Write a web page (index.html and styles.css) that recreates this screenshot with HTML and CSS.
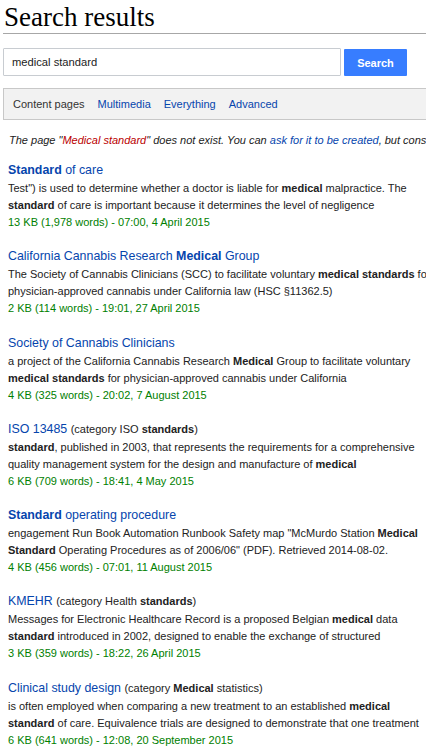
FILE: index.html
```html
<!DOCTYPE html>
<html>
<head>
<meta charset="utf-8">
<link rel="stylesheet" href="styles.css">
</head>
<body>
<div class="page">
  <h1 class="heading">Search results</h1>
  <form class="search-form">
    <input class="search-input" type="text" value="medical standard">
    <button class="search-button" type="button">Search</button>
  </form>
  <div class="tabs">
    <span class="tab tab-current">Content pages</span>
    <a class="tab">Multimedia</a>
    <a class="tab">Everything</a>
    <a class="tab">Advanced</a>
  </div>
  <p class="notice">The page "<a class="new">Medical standard</a>" does not exist. You can <a>ask for it to be created</a>, but consider checking the search results below to see whether the topic is already covered.</p>
  <ul class="results">
    <li class="result">
      <div class="result-title"><a><b>Standard</b> of care</a></div>
      <div class="snippet">Test") is used to determine whether a doctor is liable for <b>medical</b> malpractice. The<br><b>standard</b> of care is important because it determines the level of negligence</div>
      <div class="meta">13 KB (1,978 words) - 07:00, 4 April 2015</div>
    </li>
    <li class="result">
      <div class="result-title"><a>California Cannabis Research <b>Medical</b> Group</a></div>
      <div class="snippet">The Society of Cannabis Clinicians (SCC) to facilitate voluntary <b>medical standards</b> for<br>physician-approved cannabis under California law (HSC §11362.5)</div>
      <div class="meta">2 KB (114 words) - 19:01, 27 April 2015</div>
    </li>
    <li class="result">
      <div class="result-title"><a>Society of Cannabis Clinicians</a></div>
      <div class="snippet">a project of the California Cannabis Research <b>Medical</b> Group to facilitate voluntary<br><b>medical standards</b> for physician-approved cannabis under California</div>
      <div class="meta">4 KB (325 words) - 20:02, 7 August 2015</div>
    </li>
    <li class="result">
      <div class="result-title"><a>ISO 13485</a> <span class="category">(category ISO <b>standards</b>)</span></div>
      <div class="snippet"><b>standard</b>, published in 2003, that represents the requirements for a comprehensive<br>quality management system for the design and manufacture of <b>medical</b></div>
      <div class="meta">6 KB (709 words) - 18:41, 4 May 2015</div>
    </li>
    <li class="result">
      <div class="result-title"><a><b>Standard</b> operating procedure</a></div>
      <div class="snippet">engagement Run Book Automation Runbook Safety map "McMurdo Station <b>Medical</b><br><b>Standard</b> Operating Procedures as of 2006/06" (PDF). Retrieved 2014-08-02.</div>
      <div class="meta">4 KB (456 words) - 07:01, 11 August 2015</div>
    </li>
    <li class="result">
      <div class="result-title"><a>KMEHR</a> <span class="category">(category Health <b>standards</b>)</span></div>
      <div class="snippet">Messages for Electronic Healthcare Record is a proposed Belgian <b>medical</b> data<br><b>standard</b> introduced in 2002, designed to enable the exchange of structured</div>
      <div class="meta">3 KB (359 words) - 18:22, 26 April 2015</div>
    </li>
    <li class="result">
      <div class="result-title"><a>Clinical study design</a> <span class="category">(category <b>Medical</b> statistics)</span></div>
      <div class="snippet">is often employed when comparing a new treatment to an established <b>medical</b><br><b>standard</b> of care. Equivalence trials are designed to demonstrate that one treatment</div>
      <div class="meta">6 KB (641 words) - 12:08, 20 September 2015</div>
    </li>
  </ul>
</div>
</body>
</html>
```

FILE: styles.css
```css
html, body {
  margin: 0;
  padding: 0;
  background: #ffffff;
  overflow: hidden;
}

body {
  font-family: "Liberation Sans", Arial, sans-serif;
  color: #222222;
}

.page {
  width: 470px;
  padding-left: 3px;
}

.heading {
  margin: 0;
  padding: 2px 0 0 1px;
  font-family: "Liberation Serif", "Times New Roman", serif;
  font-weight: normal;
  font-size: 27px;
  line-height: 31px;
  color: #000000;
  border-bottom: 1px solid #a7a7a7;
}

.search-form {
  display: flex;
  align-items: flex-start;
  gap: 3px;
  margin: 14px 0 0 0;
}

.search-input {
  box-sizing: border-box;
  width: 338px;
  height: 28px;
  margin: 0;
  padding: 0 8px;
  border: 1px solid #c8ccd1;
  border-radius: 1px;
  font-family: "Liberation Sans", Arial, sans-serif;
  font-size: 11.2px;
  color: #222222;
  outline: none;
}

.search-button {
  box-sizing: border-box;
  width: 63px;
  height: 27px;
  margin-top: 1px;
  padding: 0;
  border: none;
  border-radius: 1px;
  background: #377dff;
  color: #ffffff;
  font-family: "Liberation Sans", Arial, sans-serif;
  font-size: 11px;
  font-weight: bold;
}

.tabs {
  box-sizing: border-box;
  display: flex;
  align-items: center;
  gap: 13px;
  height: 32px;
  margin-top: 12px;
  padding-left: 9px;
  background: #f2f2f2;
  border: 1px solid #c8c8c8;
  font-size: 11px;
}

.tab {
  color: #0645ad;
}

.tab-current {
  color: #333333;
}

.notice {
  margin: 12px 0 0 0;
  padding-left: 6px;
  font-size: 11px;
  line-height: 17px;
  font-style: italic;
  white-space: nowrap;
  color: #222222;
}

.notice a {
  color: #0645ad;
}

.notice a.new {
  color: #ba0000;
}

.results {
  list-style: none;
  margin: 11px 0 0 0;
  padding: 0 0 0 5px;
}

.result {
  margin-bottom: 15.3px;
}

.result-title {
  font-size: 12.4px;
  line-height: 20px;
  white-space: nowrap;
}

.result-title a {
  color: #0645ad;
}

.category {
  font-size: 11px;
  color: #222222;
}

.snippet {
  font-size: 11px;
  line-height: 17px;
  white-space: nowrap;
  color: #222222;
}

.meta {
  font-size: 11px;
  line-height: 17px;
  color: #008000;
}
```
